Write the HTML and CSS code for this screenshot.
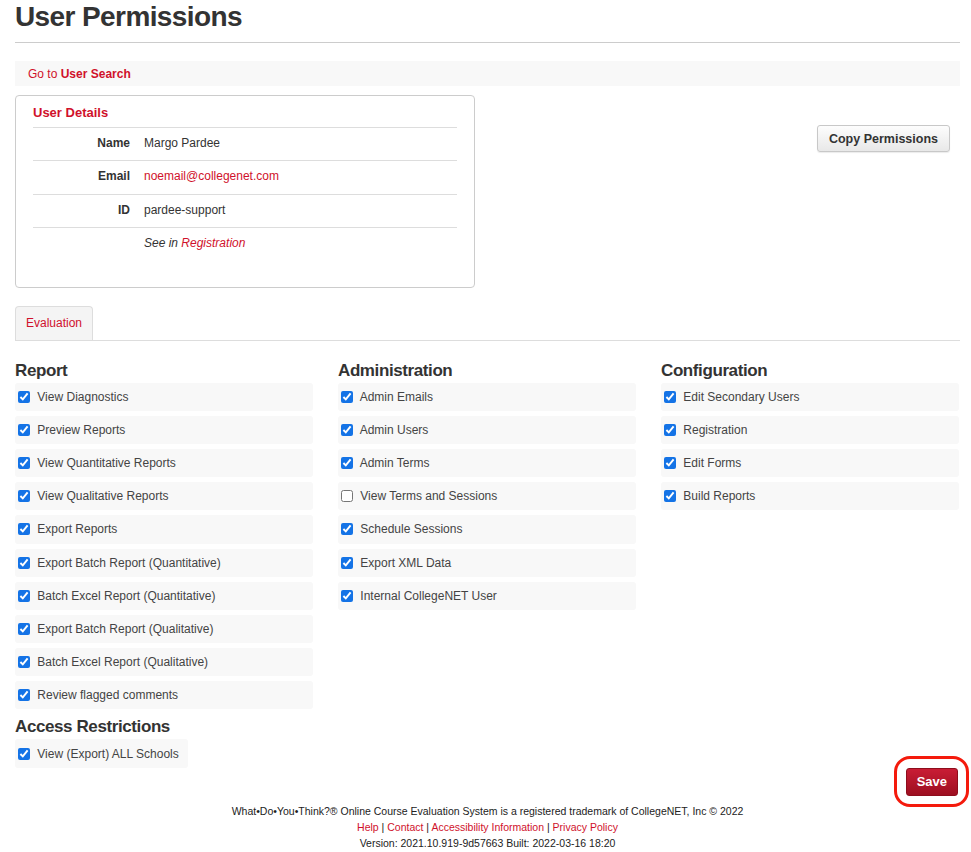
FILE: index.html
```html
<!DOCTYPE html>
<html lang="en">
<head>
    <meta charset="UTF-8">
    <meta name="viewport" content="width=device-width, initial-scale=1.0">
    <title>User Permissions</title>
    <link rel="stylesheet" href="styles.css">
</head>
<body>
    <h1 class="page-title">User Permissions</h1>

    <div class="crumb-bar">
        <a href="#">Go to <b>User Search</b></a>
    </div>

    <div class="details-row">
        <section class="details-box">
            <h2 class="details-title">User Details</h2>
            <div class="details-grid">
                <div class="details-label">Name</div>
                <div class="details-value">Margo Pardee</div>
                <div class="details-label">Email</div>
                <div class="details-value"><a href="#">noemail@collegenet.com</a></div>
                <div class="details-label">ID</div>
                <div class="details-value">pardee-support</div>
                <div class="details-label"></div>
                <div class="details-value"><i>See in <a href="#">Registration</a></i></div>
            </div>
        </section>
        <button class="btn-copy">Copy Permissions</button>
    </div>

    <!-- Tabs -->
    <div class="tabs">
        <a class="tab active" href="#">Evaluation</a>
    </div>

    <!-- Permission groups -->
    <div class="perm-columns">
        <div class="perm-col">
            <h3 class="perm-heading">Report</h3>
            <label class="perm-row"><input type="checkbox" checked> View Diagnostics</label>
            <label class="perm-row"><input type="checkbox" checked> Preview Reports</label>
            <label class="perm-row"><input type="checkbox" checked> View Quantitative Reports</label>
            <label class="perm-row"><input type="checkbox" checked> View Qualitative Reports</label>
            <label class="perm-row"><input type="checkbox" checked> Export Reports</label>
            <label class="perm-row"><input type="checkbox" checked> Export Batch Report (Quantitative)</label>
            <label class="perm-row"><input type="checkbox" checked> Batch Excel Report (Quantitative)</label>
            <label class="perm-row"><input type="checkbox" checked> Export Batch Report (Qualitative)</label>
            <label class="perm-row"><input type="checkbox" checked> Batch Excel Report (Qualitative)</label>
            <label class="perm-row"><input type="checkbox" checked> Review flagged comments</label>

            <h3 class="perm-heading access">Access Restrictions</h3>
            <label class="perm-row inline"><input type="checkbox" checked> View (Export) ALL Schools</label>
        </div>

        <div class="perm-col">
            <h3 class="perm-heading">Administration</h3>
            <label class="perm-row"><input type="checkbox" checked> Admin Emails</label>
            <label class="perm-row"><input type="checkbox" checked> Admin Users</label>
            <label class="perm-row"><input type="checkbox" checked> Admin Terms</label>
            <label class="perm-row"><input type="checkbox"> View Terms and Sessions</label>
            <label class="perm-row"><input type="checkbox" checked> Schedule Sessions</label>
            <label class="perm-row"><input type="checkbox" checked> Export XML Data</label>
            <label class="perm-row"><input type="checkbox" checked> Internal CollegeNET User</label>
        </div>

        <div class="perm-col">
            <h3 class="perm-heading">Configuration</h3>
            <label class="perm-row"><input type="checkbox" checked> Edit Secondary Users</label>
            <label class="perm-row"><input type="checkbox" checked> Registration</label>
            <label class="perm-row"><input type="checkbox" checked> Edit Forms</label>
            <label class="perm-row"><input type="checkbox" checked> Build Reports</label>
        </div>
    </div>

    <div class="save-row">
        <span class="save-wrap">
            <button class="btn-save">Save</button>
        </span>
    </div>

    <footer class="site-footer">
        <div>What&bull;Do&bull;You&bull;Think?&reg; Online Course Evaluation System is a registered trademark of CollegeNET, Inc &copy; 2022</div>
        <div>
            <a href="#">Help</a> | <a href="#">Contact</a> | <a href="#">Accessibility Information</a> | <a href="#">Privacy Policy</a>
        </div>
        <div>Version: 2021.10.919-9d57663 Built: 2022-03-16 18:20</div>
    </footer>
</body>
</html>
```

FILE: styles.css
```css
/* Base */
body {
    margin: 0;
    padding: 0 11px 0 15px;
    font-family: "Liberation Sans", Arial, Helvetica, sans-serif;
    font-size: 12px;
    color: #333;
    background: #fff;
}

a {
    color: #d0112b;
    text-decoration: none;
}

/* Page title */
.page-title {
    margin: 0;
    padding: 1px 0 10px;
    font-size: 28px;
    line-height: 31px;
    letter-spacing: -0.6px;
    font-weight: bold;
    color: #333;
    border-bottom: 1px solid #ccc;
}

/* Breadcrumb bar */
.crumb-bar {
    margin-top: 18px;
    height: 25px;
    padding: 0 13px;
    display: flex;
    align-items: center;
    background: #f8f8f8;
    font-size: 12px;
}

/* User details */
.details-row {
    display: flex;
    justify-content: space-between;
    align-items: flex-start;
    margin-top: 9px;
}

.details-box {
    width: 424px;
    padding: 9px 17px 26px;
    border: 1px solid #ccc;
    border-radius: 4px;
}

.details-title {
    margin: 0;
    padding-bottom: 6px;
    font-size: 13px;
    line-height: 16px;
    color: #d0112b;
    border-bottom: 1px solid #ddd;
}

.details-grid {
    display: grid;
    grid-template-columns: 97px 1fr;
}

.details-label,
.details-value {
    height: 32.4px;
    line-height: 31px;
    border-bottom: 1px solid #ddd;
}

.details-label {
    text-align: right;
    font-weight: bold;
}

.details-value {
    padding-left: 14px;
}

.details-grid > :nth-last-child(-n+2) {
    border-bottom: none;
}

.btn-copy {
    margin: 30px 10px 0 0;
    height: 27px;
    padding: 0 11px;
    font-family: inherit;
    font-size: 12.5px;
    font-weight: bold;
    color: #333;
    background: linear-gradient(#fdfdfd, #e8e8e8);
    border: 1px solid #c8c8c8;
    border-radius: 3px;
    box-shadow: 0 1px 1px rgba(0, 0, 0, 0.08);
}

/* Tabs */
.tabs {
    margin-top: 18px;
    display: flex;
    border-bottom: 1px solid #ddd;
}

.tab {
    height: 33px;
    padding: 0 10px;
    display: flex;
    align-items: center;
    font-size: 12px;
    background: #f4f4f4;
    border: 1px solid #ddd;
    border-bottom: none;
    border-radius: 4px 4px 0 0;
}

/* Permission columns */
.perm-columns {
    display: grid;
    grid-template-columns: repeat(3, 298px);
    column-gap: 25px;
}

.perm-heading {
    margin: 20px 0 2px;
    font-size: 17px;
    line-height: 20px;
    letter-spacing: -0.4px;
    color: #333;
}

.perm-heading.access {
    margin-top: 8px;
}

.perm-row {
    display: flex;
    align-items: center;
    height: 28.2px;
    margin-bottom: 5px;
    background: #f8f8f8;
    border-radius: 3px;
    color: #444;
    font-size: 12px;
    white-space: pre;
}

.perm-row.inline {
    display: inline-flex;
    padding-right: 9px;
}

.perm-row input {
    margin: 0 4px 0 3px;
    width: 12px;
    height: 12px;
    accent-color: #1473e6;
}

/* Save */
.save-row {
    display: flex;
    justify-content: flex-end;
    margin-top: -5px;
    padding-right: 2px;
}

.save-wrap {
    position: relative;
}

.save-wrap::after {
    content: "";
    position: absolute;
    top: -12px;
    left: -12px;
    right: -11px;
    bottom: -11px;
    border: 3.5px solid #f41a0c;
    border-radius: 16px;
}

.btn-save {
    display: block;
    height: 28px;
    padding: 0 10px;
    font-family: inherit;
    font-size: 13px;
    font-weight: bold;
    color: #fff;
    background: linear-gradient(#c91d35, #9d0f20);
    border: 1px solid #8e0d1c;
    border-radius: 3px;
}

/* Footer */
.site-footer {
    margin-top: 7px;
    text-align: center;
    font-size: 10.5px;
    line-height: 16px;
    color: #222;
}
```
